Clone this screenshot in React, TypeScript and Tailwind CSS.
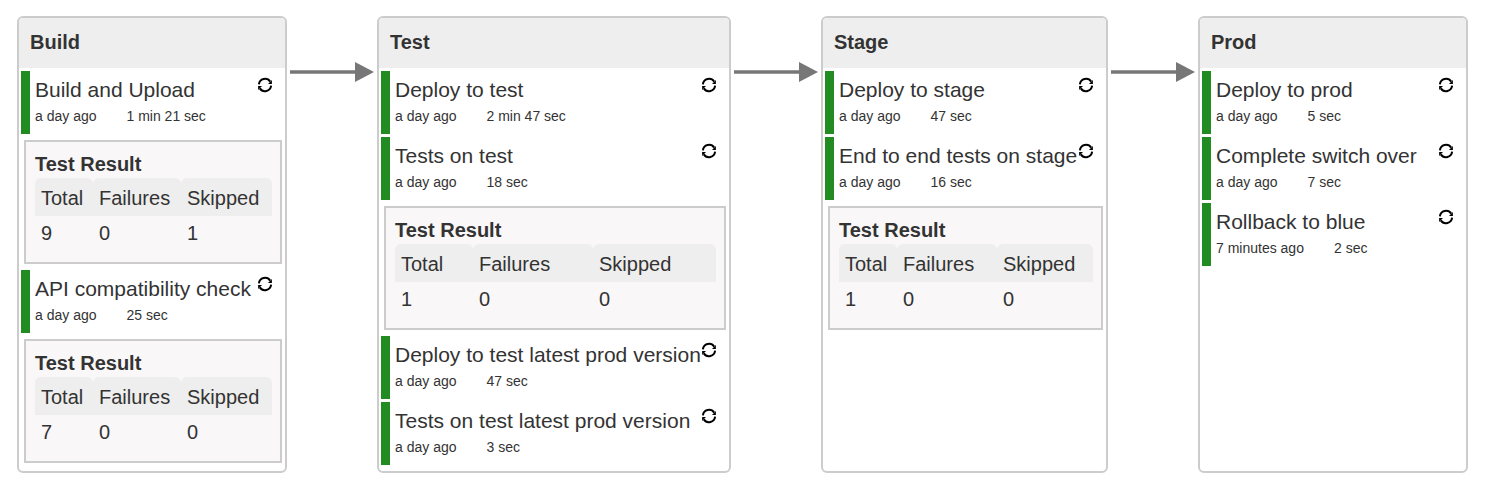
import React from 'react';

interface Step {
    name: string;
    when: string;
    took: string;
    result?: { total: number; failures: number; skipped: number };
}

interface Stage {
    title: string;
    widthClass: string;
    columnsClass: string;
    steps: Step[];
}

const stages: Stage[] = [
    {
        title: 'Build',
        widthClass: 'w-[270px]',
        columnsClass: 'grid-cols-[58px_88px_91px]',
        steps: [
            { name: 'Build and Upload', when: 'a day ago', took: '1 min 21 sec', result: { total: 9, failures: 0, skipped: 1 } },
            { name: 'API compatibility check', when: 'a day ago', took: '25 sec', result: { total: 7, failures: 0, skipped: 0 } },
        ],
    },
    {
        title: 'Test',
        widthClass: 'w-[354px]',
        columnsClass: 'grid-cols-[78px_120px_123px]',
        steps: [
            { name: 'Deploy to test', when: 'a day ago', took: '2 min 47 sec' },
            { name: 'Tests on test', when: 'a day ago', took: '18 sec', result: { total: 1, failures: 0, skipped: 0 } },
            { name: 'Deploy to test latest prod version', when: 'a day ago', took: '47 sec' },
            { name: 'Tests on test latest prod version', when: 'a day ago', took: '3 sec' },
        ],
    },
    {
        title: 'Stage',
        widthClass: 'w-[287px]',
        columnsClass: 'grid-cols-[58px_100px_96px]',
        steps: [
            { name: 'Deploy to stage', when: 'a day ago', took: '47 sec' },
            { name: 'End to end tests on stage', when: 'a day ago', took: '16 sec', result: { total: 1, failures: 0, skipped: 0 } },
        ],
    },
    {
        title: 'Prod',
        widthClass: 'w-[270px]',
        columnsClass: 'grid-cols-[58px_88px_91px]',
        steps: [
            { name: 'Deploy to prod', when: 'a day ago', took: '5 sec' },
            { name: 'Complete switch over', when: 'a day ago', took: '7 sec' },
            { name: 'Rollback to blue', when: '7 minutes ago', took: '2 sec' },
        ],
    },
];

const RerunIcon = () => (
    <svg viewBox="0 0 16 16" className="w-[16px] h-[16px] shrink-0 mt-[6px] text-black" fill="none" stroke="currentColor" strokeWidth="2">
        <path d="M1.9 7.4A6.2 6.2 0 0 1 13.2 4.6" />
        <path d="M14.1 8.6A6.2 6.2 0 0 1 2.8 11.4" />
        <path d="M14.9 3v3.9H11z" fill="currentColor" stroke="none" />
        <path d="M1.1 13V9.1H5z" fill="currentColor" stroke="none" />
    </svg>
);

const Arrow = () => (
    <div className="w-[90px] shrink-0 pt-[45px]">
        <svg viewBox="0 0 90 22" className="w-[90px] h-[22px]">
            <line x1="3" y1="11" x2="70" y2="11" stroke="#777777" strokeWidth="3.5" />
            <path d="M68 1l19 10-19 10z" fill="#777777" />
        </svg>
    </div>
);

const TestResult: React.FC<{ result: NonNullable<Step['result']>; columnsClass: string }> = ({ result, columnsClass }) => (
    <div className="mx-[3px] my-[6px] h-[124px] border-2 border-[#cccccc] bg-[#f9f7f8] px-[9px] pt-[11px]">
        <div className="text-[20px] leading-[23px] font-bold text-[#333333]">Test Result</div>
        <div className={`grid ${columnsClass} mt-[2px] text-[20px] text-[#333333]`}>
            <div className="h-[38px] leading-[38px] pt-[1px] bg-[#eeeeee] rounded-t-[6px] px-[6px]">Total</div>
            <div className="h-[38px] leading-[38px] pt-[1px] bg-[#eeeeee] rounded-t-[6px] px-[6px]">Failures</div>
            <div className="h-[38px] leading-[38px] pt-[1px] bg-[#eeeeee] rounded-t-[6px] px-[6px]">Skipped</div>
            <div className="px-[6px] leading-[34px]">{result.total}</div>
            <div className="px-[6px] leading-[34px]">{result.failures}</div>
            <div className="px-[6px] leading-[34px]">{result.skipped}</div>
        </div>
    </div>
);

const StepRow: React.FC<{ step: Step; columnsClass: string }> = ({ step, columnsClass }) => (
    <div>
        <div className="flex h-[63px] mb-[3px]">
            <div className="w-[9px] shrink-0 bg-[#228b22]" />
            <div className="flex-1 min-w-0 flex justify-between pl-[5px] pr-[12px]">
                <div>
                    <div className="text-[21px] leading-[23px] pt-[7px] text-[#333333] whitespace-nowrap">{step.name}</div>
                    <div className="flex text-[14px] leading-[16px] mt-[7px] text-[#333333]">
                        <span className="mr-[30px] whitespace-nowrap">{step.when}</span>
                        <span className="whitespace-nowrap">{step.took}</span>
                    </div>
                </div>
                <RerunIcon />
            </div>
        </div>
        {step.result && <TestResult result={step.result} columnsClass={columnsClass} />}
    </div>
);

export default function App() {
    return (
        <div className="w-[1485px] h-[493px] bg-white pt-[16px] pl-[17px] flex font-['Liberation_Sans',Arial,sans-serif]">
            {stages.map((stage, i) => (
                <React.Fragment key={stage.title}>
                    {i > 0 && <Arrow />}
                    <div className={`${stage.widthClass} h-[457px] shrink-0 border-2 border-[#cccccc] rounded-[6px] overflow-hidden`}>
                        <div className="h-[50px] bg-[#eeeeee] px-[11px] pt-[13px] text-[20px] leading-[23px] font-bold text-[#333333]">{stage.title}</div>
                        <div className="pt-[3px] pl-[2px]">
                            {stage.steps.map((step) => (
                                <StepRow key={step.name} step={step} columnsClass={stage.columnsClass} />
                            ))}
                        </div>
                    </div>
                </React.Fragment>
            ))}
        </div>
    );
}
